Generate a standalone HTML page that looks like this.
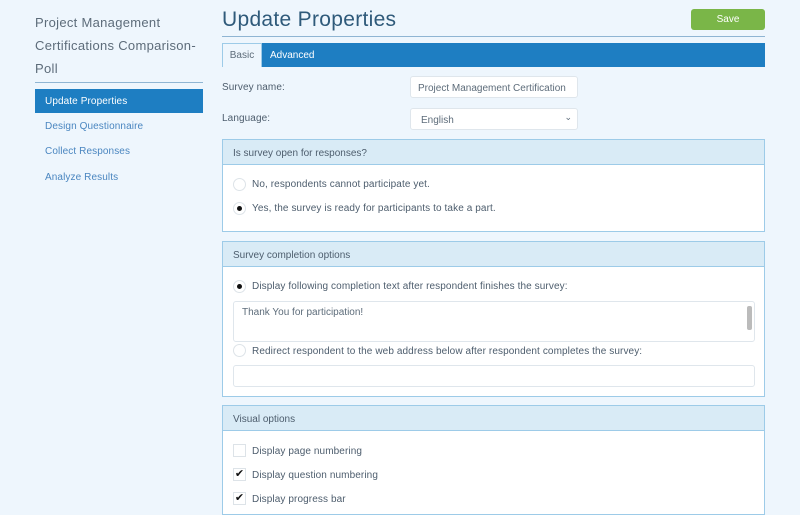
<!DOCTYPE html>
<html><head><style>
*{box-sizing:border-box;margin:0;padding:0}
body{width:800px;height:500px;overflow:hidden;background:#eef6fd;font-family:"Liberation Sans",sans-serif;color:#4d5d6d;position:relative;font-size:10px}
.a{position:absolute}
.lt{left:35px;font-size:13px;color:#5d6c7a;letter-spacing:.3px}
.nav{left:45px;font-size:10px;color:#4a86c0;letter-spacing:.1px}
.panel{position:absolute;left:222px;width:543px;border:1px solid #9dcbe8;background:#fff}
.ph{height:25px;background:#d9ebf6;border-bottom:1px solid #9dcbe8;padding:8px 10px 0;font-size:10px;color:#4d5d6d}
.rad{position:absolute;width:13px;height:13px;border-radius:50%;border:1px solid #dde3e8;background:#fff}
.rad.on::after{content:"";position:absolute;left:3px;top:3px;width:5px;height:5px;border-radius:50%;background:#111}
.chk{position:absolute;left:10px;width:13px;height:13px;border:1px solid #dde3e8;background:#fff;font-size:11px;line-height:11px;text-align:center;color:#111}
.t{position:absolute;font-size:10px;color:#4d5d6d;letter-spacing:.1px}
.inp{position:absolute;background:#fff;border:1px solid #dfe6ec;border-radius:3px}
</style></head><body>
<div class="a lt" style="top:15px">Project Management</div>
<div class="a lt" style="top:38px">Certifications Comparison-</div>
<div class="a lt" style="top:61px">Poll</div>
<div class="a" style="left:35px;top:82px;width:168px;height:1px;background:#8fb5d3"></div>
<div class="a" style="left:35px;top:89px;width:168px;height:24px;background:#1e7ec2"></div>
<div class="a nav" style="top:96px;color:#fff">Update Properties</div>
<div class="a nav" style="top:121px">Design Questionnaire</div>
<div class="a nav" style="top:146px">Collect Responses</div>
<div class="a nav" style="top:172px">Analyze Results</div>

<div class="a" style="left:222px;top:8px;font-size:21px;color:#2f5a7a;letter-spacing:.3px">Update Properties</div>
<div class="a" style="left:691px;top:9px;width:74px;height:21px;background:#7ab648;border-radius:3px;color:#fff;text-align:center;line-height:22px;font-size:10px">Save</div>
<div class="a" style="left:222px;top:36px;width:543px;height:1px;background:#8fb5d3"></div>
<div class="a" style="left:222px;top:43px;width:543px;height:24px;background:#1e7ec2"></div>
<div class="a" style="left:222px;top:43px;width:40px;height:24px;background:#eef6fd;border:1px solid #9dcbe8;border-bottom:none;text-align:center;line-height:24px;color:#5d6c7a">Basic</div>
<div class="a" style="left:270px;top:50px;color:#fff">Advanced</div>

<div class="t" style="left:222px;top:82px">Survey name:</div>
<div class="inp" style="left:410px;top:76px;width:168px;height:22px;padding:6px 7px;white-space:nowrap;overflow:hidden;color:#5d6c7a">Project Management Certification</div>
<div class="t" style="left:222px;top:113px">Language:</div>
<div class="inp" style="left:410px;top:108px;width:168px;height:22px;padding:6px 10px;color:#5d6c7a">English<span style="position:absolute;right:5px;top:3px;font-size:9px">&#8964;</span></div>

<div class="panel" style="top:139px;height:93px">
<div class="ph">Is survey open for responses?</div>
<div class="rad" style="left:10px;top:38px"></div><div class="t" style="left:29px;top:39px">No, respondents cannot participate yet.</div>
<div class="rad on" style="left:10px;top:62px"></div><div class="t" style="left:29px;top:63px">Yes, the survey is ready for participants to take a part.</div>
</div>

<div class="panel" style="top:241px;height:156px">
<div class="ph">Survey completion options</div>
<div class="rad on" style="left:10px;top:38px"></div><div class="t" style="left:29px;top:39px">Display following completion text after respondent finishes the survey:</div>
<div class="inp" style="left:10px;top:59px;width:522px;height:41px;padding:5px 8px;color:#5d6c7a">Thank You for participation!<div style="position:absolute;right:2px;top:4px;width:5px;height:24px;background:#bbb;border-radius:2px"></div></div>
<div class="rad" style="left:10px;top:102px"></div><div class="t" style="left:29px;top:104px">Redirect respondent to the web address below after respondent completes the survey:</div>
<div class="inp" style="left:10px;top:123px;width:522px;height:22px"></div>
</div>

<div class="panel" style="top:405px;height:110px">
<div class="ph">Visual options</div>
<div class="chk" style="top:38px"></div><div class="t" style="left:29px;top:40px">Display page numbering</div>
<div class="chk" style="top:62px">&#10004;</div><div class="t" style="left:29px;top:64px">Display question numbering</div>
<div class="chk" style="top:86px">&#10004;</div><div class="t" style="left:29px;top:88px">Display progress bar</div>
</div>
</body></html>
